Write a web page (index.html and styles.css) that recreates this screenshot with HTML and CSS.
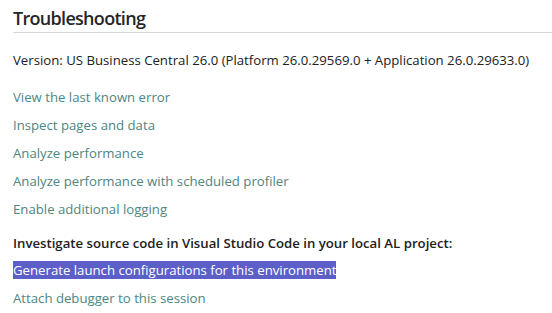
FILE: index.html
```html
<!DOCTYPE html>
<html>
<head>
<meta charset="utf-8">
<link rel="stylesheet" href="styles.css">
</head>
<body>
<div class="panel">
  <h1 class="title">Troubleshooting</h1>
  <p class="version">Version: US Business Central 26.0 (Platform 26.0.29569.0 + Application 26.0.29633.0)</p>
  <ul class="links">
    <li><a class="link">View the last known error</a></li>
    <li><a class="link">Inspect pages and data</a></li>
    <li><a class="link">Analyze performance</a></li>
    <li><a class="link">Analyze performance with scheduled profiler</a></li>
    <li><a class="link">Enable additional logging</a></li>
  </ul>
  <p class="heading">Investigate source code in Visual Studio Code in your local AL project:</p>
  <ul class="links">
    <li><a class="link selected">Generate launch configurations for this environment</a></li>
    <li><a class="link">Attach debugger to this session</a></li>
  </ul>
</div>
</body>
</html>
```
FILE: styles.css
```css
html, body {
  margin: 0;
  padding: 0;
  background: #ffffff;
}
body {
  font-family: "Open Sans", "Noto Sans", sans-serif;
  color: #212121;
  overflow: hidden;
}
.panel {
  padding: 4px 0 0 13px;
}
.title {
  margin: 0;
  font-size: 18px;
  font-weight: 600;
  letter-spacing: -0.7px;
  line-height: 28px;
  color: #262626;
  border-bottom: 1px solid #d6d6d6;
}
.version {
  margin: 17px 0 0 0;
  font-size: 13.2px;
  line-height: 20px;
}
.links {
  list-style: none;
  margin: 17px 0 0 0;
  padding: 0;
  display: flex;
  flex-direction: column;
  gap: 8px;
}
.links li {
  display: flex;
  height: 20px;
  align-items: center;
}
.link {
  font-size: 13.2px;
  line-height: 20px;
  color: #4d8682;
}
.heading {
  margin: 14px 0 0 0;
  font-size: 13.2px;
  line-height: 20px;
  font-weight: 600;
}
.heading + .links {
  margin-top: 7px;
}
.selected {
  background: #5b5fc7;
  color: #ffffff;
  line-height: 18px;
}
```
